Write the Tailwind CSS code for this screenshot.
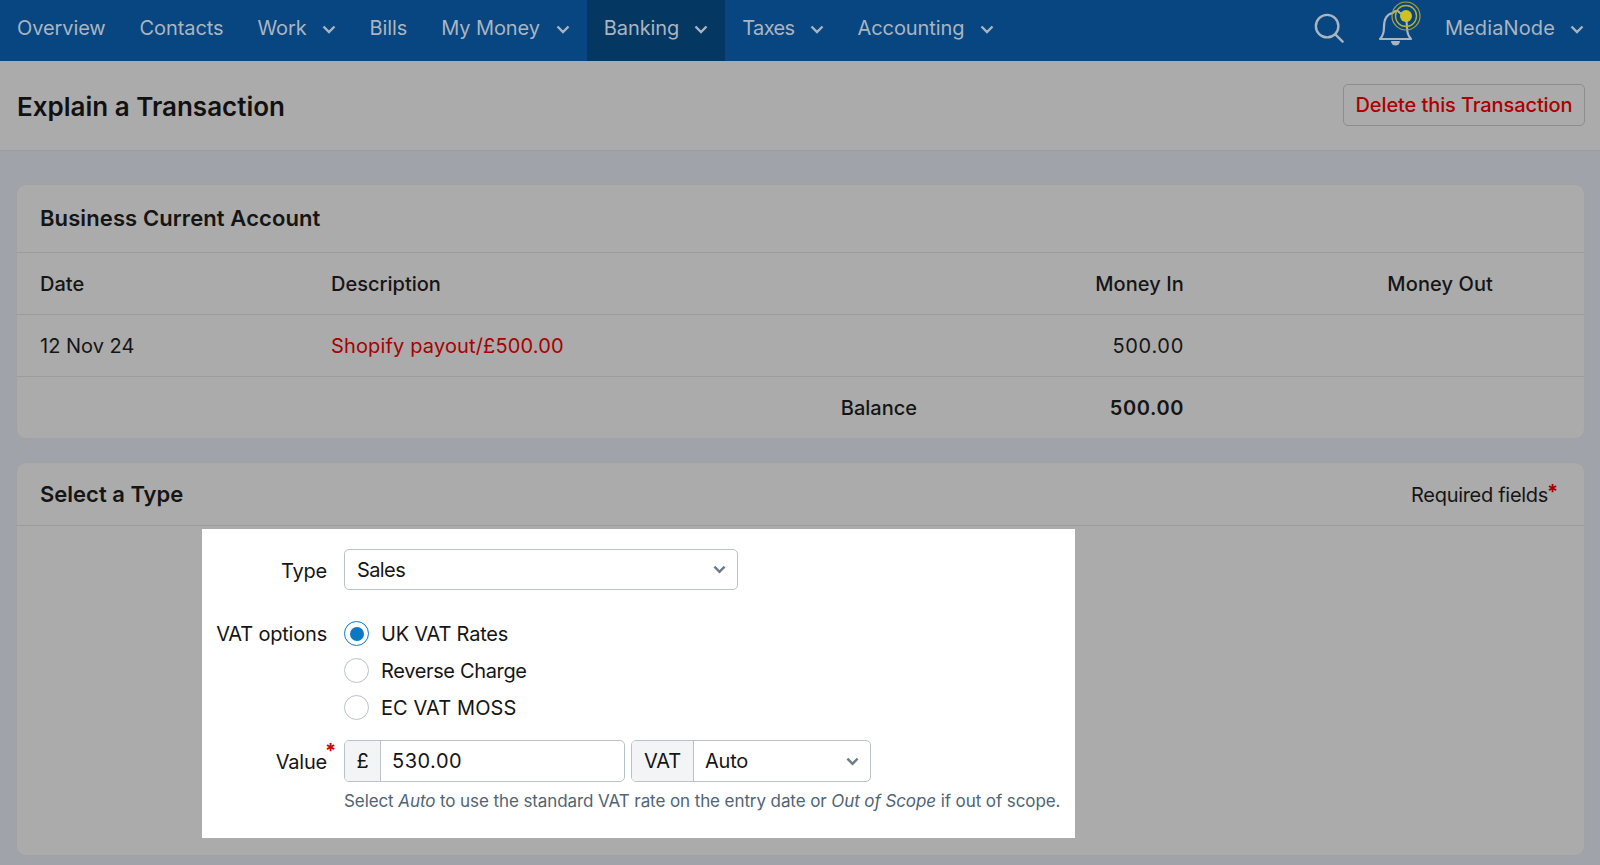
<!DOCTYPE html>
<html lang="en">
<head>
    <meta charset="UTF-8">
    <title>Explain a Transaction</title>
    <script src="https://cdn.jsdelivr.net/npm/@tailwindcss/browser@4"></script>
</head>
<body class="bg-[#a0a3a9] font-['Inter',sans-serif] text-[#151515] overflow-hidden">
    <div class="h-[865px] flex flex-col">
        <!-- Top nav -->
        <nav class="h-[61px] shrink-0 bg-[#074680] flex items-stretch text-[#aab5c0] text-[20px] tracking-[-0.1px]">
            <a class="px-[17px] pb-[5px] flex items-center">Overview</a>
            <a class="px-[17px] pb-[5px] flex items-center">Contacts</a>
            <a class="px-[17px] pb-[5px] flex items-center gap-[15px]">Work
                <svg class="w-[14px] h-[9px] mt-[2px]" viewBox="0 0 14 9" fill="none" stroke="currentColor" stroke-width="2.4"><path d="M1.5 1.5 7 7l5.500-5.500"/></svg>
            </a>
            <a class="px-[17px] pb-[5px] flex items-center">Bills</a>
            <a class="px-[17px] pb-[5px] flex items-center gap-[16px]">My Money
                <svg class="w-[14px] h-[9px] mt-[2px]" viewBox="0 0 14 9" fill="none" stroke="currentColor" stroke-width="2.4"><path d="M1.5 1.5 7 7l5.500-5.500"/></svg>
            </a>
            <a class="px-[17px] pb-[5px] flex items-center gap-[15px] bg-[#053763]">Banking
                <svg class="w-[14px] h-[9px] mt-[2px]" viewBox="0 0 14 9" fill="none" stroke="currentColor" stroke-width="2.4"><path d="M1.5 1.5 7 7l5.500-5.500"/></svg>
            </a>
            <a class="px-[17px] pb-[5px] flex items-center gap-[15px]"><span class="tracking-[-0.6px]">Taxes</span>
                <svg class="w-[14px] h-[9px] mt-[2px]" viewBox="0 0 14 9" fill="none" stroke="currentColor" stroke-width="2.4"><path d="M1.5 1.5 7 7l5.500-5.500"/></svg>
            </a>
            <a class="px-[17px] pb-[5px] flex items-center gap-[16px]">Accounting
                <svg class="w-[14px] h-[9px] mt-[2px]" viewBox="0 0 14 9" fill="none" stroke="currentColor" stroke-width="2.4"><path d="M1.5 1.5 7 7l5.500-5.500"/></svg>
            </a>
            <div class="ml-auto flex items-center pr-[16px] pb-[5px]">
                <svg class="w-[30px] h-[30px]" viewBox="0 0 32 32" fill="none" stroke="currentColor" stroke-width="2.5"><circle cx="14" cy="14" r="12"/><path d="m23 23 7.500 7.500" stroke-linecap="round"/></svg>
                <svg class="w-[46px] h-[46px] ml-[34px] mb-[10px] overflow-visible" viewBox="0 0 46 46" fill="none">
                    <path d="M3 39c3-3 4-6 4-12 0-8 3-13 9-14 2-3 5-3 7 0 4 1 7 6 7 14 0 6 1 9 4 12z" transform="translate(-1 0)" stroke="#aab5c0" stroke-width="2.2" stroke-linejoin="round"/>
                    <path d="M13 41h9a4.500 4.500 0 0 1-9 0z" fill="#aab5c0"/>
                    <circle cx="28" cy="16" r="14" stroke="#a8a33a" stroke-width="1.200"/>
                    <circle cx="28" cy="16" r="10.500" stroke="#b8b030" stroke-width="1.400"/>
                    <circle cx="28" cy="16" r="6" fill="#cdc123"/>
                </svg>
                <span class="ml-[21px] tracking-[0.12px]">MediaNode</span>
                <svg class="w-[14px] h-[9px] ml-[15px] mt-[2px]" viewBox="0 0 14 9" fill="none" stroke="currentColor" stroke-width="2.4"><path d="M1.5 1.5 7 7l5.500-5.500"/></svg>
            </div>
        </nav>

        <!-- Page header -->
        <header class="h-[90px] shrink-0 bg-[#ababab] border-b border-[#9a9da3] flex items-center justify-between pl-[17px] pr-[15px]">
            <h1 class="mt-[2px] text-[26px] font-semibold text-[#111]">Explain a Transaction</h1>
            <button class="h-[42px] w-[242px] mb-[2px] rounded-[5px] border border-[#8b8d8f] text-[#ad0000] text-[20px] font-medium tracking-[-0.1px]">Delete this Transaction</button>
        </header>

        <main class="pl-[16px] pr-[15px] pt-[33px]">
            <!-- Account card -->
            <section class="h-[255px] rounded-[10px] bg-[#ababab] border border-[#a0a2a6] overflow-hidden">
                <h2 class="h-[68px] flex items-center px-[23px] text-[22px] font-semibold tracking-[0.1px] border-b border-[#9c9c9c]">Business Current Account</h2>
                <div class="h-[62px] grid grid-cols-[291px_1fr_267px_309px_91px] items-center pl-[23px] text-[20px] font-medium border-b border-[#9c9c9c]">
                    <span>Date</span>
                    <span>Description</span>
                    <span class="text-right tracking-[0.1px]">Money In</span>
                    <span class="text-right tracking-[0.1px]">Money Out</span>
                </div>
                <div class="h-[62px] grid grid-cols-[291px_1fr_267px_309px_91px] items-center pl-[23px] text-[20px] border-b border-[#9c9c9c]">
                    <span>12 Nov 24</span>
                    <a class="text-[#a80000] tracking-[0.15px]">Shopify payout/£500.00</a>
                    <span class="text-right tracking-[0.7px]">500.00</span>
                </div>
                <div class="h-[61px] grid grid-cols-[291px_1fr_267px_309px_91px] items-center pl-[23px] text-[20px] font-medium">
                    <span></span>
                    <span class="text-right">Balance</span>
                    <span class="text-right font-semibold tracking-[0.6px]">500.00</span>
                </div>
            </section>

            <!-- Select a type card -->
            <section class="mt-[23px] h-[394px] rounded-[10px] bg-[#ababab] border border-[#a0a2a6]">
                <div class="h-[63px] pt-[1px] flex items-center justify-between pl-[23px] pr-[36px] border-b border-[#9c9c9c]">
                    <h2 class="text-[22px] font-semibold">Select a Type</h2>
                    <span class="text-[20px] tracking-[-0.3px] relative">Required fields<span class="absolute right-[-10px] top-[-3px] text-[#a80000] font-bold">*</span></span>
                </div>

                <!-- Highlighted form -->
                <form class="ml-[185px] mt-[3px] w-[873px] h-[309px] bg-white pt-[20px] text-[20px] tracking-[-0.2px]">
                    <div class="flex">
                        <label class="w-[125px] text-right pt-[7px]">Type</label>
                        <div class="ml-[17px] w-[394px] h-[41px] rounded-[5px] border border-[#b9c2cb] flex items-center justify-between pl-[12px] pr-[11px]">
                            <span class="tracking-[-0.6px]">Sales</span>
                            <svg class="w-[13px] h-[9px]" viewBox="0 0 14 9" fill="none" stroke="#6b7b88" stroke-width="2.600"><path d="M1.500 1.500 7 7l5.500-5.500"/></svg>
                        </div>
                    </div>

                    <div class="flex mt-[31px]">
                        <label class="w-[125px] text-right pt-[1px] leading-[25px]">VAT options</label>
                        <div class="ml-[17px] flex flex-col gap-[12px]">
                            <div class="flex items-center gap-[12px] h-[25px]">
                                <span class="w-[25px] h-[25px] rounded-full border border-[#0a78c8] flex items-center justify-center"><span class="w-[14px] h-[14px] rounded-full bg-[#0a78c2]"></span></span>
                                UK VAT Rates
                            </div>
                            <div class="flex items-center gap-[12px] h-[25px] tracking-[-0.35px]">
                                <span class="w-[25px] h-[25px] rounded-full border border-[#b9c2cb]"></span>
                                Reverse Charge
                            </div>
                            <div class="flex items-center gap-[12px] h-[25px] tracking-[0.1px]">
                                <span class="w-[25px] h-[25px] rounded-full border border-[#b9c2cb]"></span>
                                EC VAT MOSS
                            </div>
                        </div>
                    </div>

                    <div class="flex mt-[20px]">
                        <label class="w-[125px] text-right pt-[7px] relative">Value<span class="absolute right-[-9px] top-[-4px] text-[#d80000] font-bold">*</span></label>
                        <div class="ml-[17px]">
                            <div class="flex gap-[6px]">
                                <div class="w-[281px] h-[42px] rounded-[5px] border border-[#b9c2cb] flex overflow-hidden">
                                    <span class="w-[36px] bg-[#f3f4f6] border-r border-[#b9c2cb] flex items-center justify-center">£</span>
                                    <span class="pl-[11px] flex items-center tracking-[0.5px]">530.00</span>
                                </div>
                                <div class="w-[240px] h-[42px] rounded-[5px] border border-[#b9c2cb] flex overflow-hidden">
                                    <span class="w-[62px] bg-[#f3f4f6] border-r border-[#b9c2cb] flex items-center justify-center">VAT</span>
                                    <span class="pl-[11px] flex-1 flex items-center">Auto</span>
                                    <span class="pr-[11px] flex items-center">
                                        <svg class="w-[13px] h-[9px]" viewBox="0 0 14 9" fill="none" stroke="#6b7b88" stroke-width="2.600"><path d="M1.500 1.500 7 7l5.500-5.500"/></svg>
                                    </span>
                                </div>
                            </div>
                            <p class="mt-[7px] text-[17px] text-[#4f6475] tracking-[-0.09px] whitespace-nowrap">Select <em>Auto</em> to use the standard VAT rate on the entry date or <em>Out of Scope</em> if out of scope.</p>
                        </div>
                    </div>
                </form>
            </section>
        </main>
    </div>
</body>
</html>
